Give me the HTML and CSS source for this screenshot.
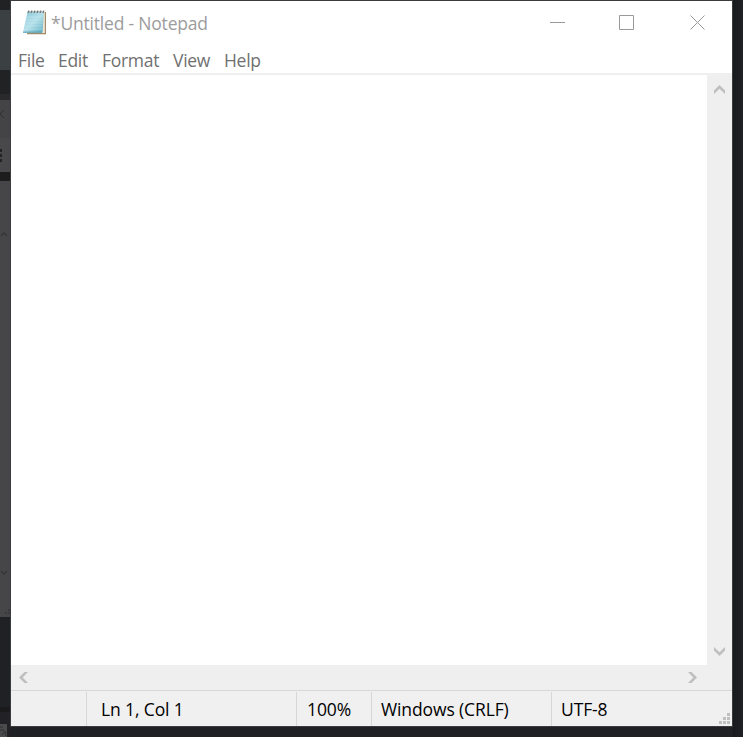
FILE: index.html
```html
<!DOCTYPE html>
<html lang="en">
<head>
<meta charset="utf-8">
<title>*Untitled - Notepad</title>
<link rel="stylesheet" href="styles.css">
</head>
<body>
<div class="desktop">
  <svg class="behind" width="11" height="737" fill="none">
    <path class="ink" d="M4 110l-4 4 4 4"/>
    <path class="dots" d="M0 149h2v3H0zM0 154h2v3H0zM0 159h2v3H0z"/>
    <path class="caret" d="M1 236l3-3 3 3M1 571l3 3 3-3"/>
    <path class="grain" d="M8 609h2v2H8zM5 612h2v2H5zM8 612h2v2H8z"/>
    <path class="doc" d="M0 724h7v13H0z"/>
    <path class="ink" d="M0 727h3M0 730h4M2 735l3-4 1 5"/>
  </svg>
  <main class="window">
    <header class="titlebar">
      <svg class="logo" width="26" height="28" viewBox="0 0 26 28">
        <defs>
          <linearGradient id="paper" x1="0" y1="0" x2="1" y2="1">
            <stop offset="0" stop-color="#8ac9d8"/><stop offset=".5" stop-color="#b4e0ea"/><stop offset="1" stop-color="#58abc1"/>
          </linearGradient>
        </defs>
        <path d="M6 4H24V26.300H5z" fill="#a08c6b"/>
        <path d="M6 4H22.800V25H5z" fill="#eee6d3"/>
        <path d="M5.500 4H22L20.500 24.500H1z" fill="url(#paper)"/>
        <path d="M4.500 9H21M4 12H20.700M3.500 15H20.400M3 18H20.100M2.400 21H19.800" stroke="#d4eff4" stroke-width=".8" opacity=".55"/>
        <path d="M1 24.200H20" stroke="#4f9aae"/>
        <path d="M5.500 3.800H22" stroke="#a8adae"/>
        <path d="M6 5L7 2.500M9 5L10 2.500M12 5L13 2.500M15 5L16 2.500M18 5L19 2.500M21 5L22 2.500" stroke="#6b7577" stroke-width="1.1"/>
      </svg>
      <h1 class="title">*Untitled - Notepad</h1>
      <svg class="controls" width="155" height="15" fill="none">
        <path d="M0 7.5h15M69.500 .5h14v14h-14z"/>
        <path d="M140.500 .5l14 14M154.500 .5l-14 14"/>
      </svg>
    </header>
    <nav class="menu"><span class="m-file">File</span><span class="m-edit">Edit</span><span class="m-format">Format</span><span class="m-view">View</span><span class="m-help">Help</span></nav>
    <section class="workspace">
      <div class="editor"></div>
      <div class="vscroll">
        <svg width="11" height="9"><path d="M0 5.500L5.500 0 11 5.500V9L5.500 3.700 0 9z"/></svg>
        <svg width="11" height="9"><path d="M0 0L5.500 5.300 11 0V3.500L5.500 9 0 3.500z"/></svg>
      </div>
      <div class="hscroll">
        <svg width="9" height="11"><path d="M5.500 0H9L3.700 5.500 9 11H5.500L0 5.500z"/></svg>
        <svg width="9" height="11"><path d="M0 0H3.500L9 5.500 3.500 11H0L5.300 5.500z"/></svg>
      </div>
    </section>
    <footer class="status">
      <div class="cell blank"></div>
      <div class="cell position"><span>Ln 1, Col 1</span></div>
      <div class="cell zoom"><span>100%</span></div>
      <div class="cell ending"><span>Windows (CRLF)</span></div>
      <div class="cell encoding"><span>UTF-8</span></div>
      <svg class="grip" width="11" height="11"><path d="M8 0h3v3H8zM4 4h3v3H4zM8 4h3v3H8zM0 8h3v3H0zM4 8h3v3H4zM8 8h3v3H8z"/></svg>
    </footer>
  </main>
</div>
</body>
</html>
```
FILE: styles.css
```css
* { box-sizing: border-box; }
body { margin: 0; overflow: hidden; font-family: "Open Sans", "Noto Sans", sans-serif; }
.desktop {
  display: flex;
  width: 743px;
  height: 737px;
  background: linear-gradient(90deg, transparent 732px, #191a1c 733px, #202125 743px), linear-gradient(#1e2023 727px, #202125);
}
.behind {
  flex: none;
  margin-right: -1px;
  background: linear-gradient(#202224 10px, #3b4042 10px 70px, #202224 70px 94px, #2a2a2c 94px 100px, #444446 100px 138px, #48484a 138px 172px, #1d1d1e 172px 181px, #464648 181px 617px, #1f2124 617px 707px, #1a1a1c 707px 712px, #222126 712px);
}
.ink { stroke: #303032; }
.dots { fill: #222224; }
.caret { stroke: #363638; stroke-width: 1.3; }
.grain { fill: #39393b; }
.doc { fill: #4b4b4d; }
.window {
  display: flex;
  flex-direction: column;
  width: 723px;
  height: 727px;
  border: 1px solid #3b3c3e;
  background: #fff;
}
.titlebar { display: flex; align-items: flex-start; height: 45px; padding-left: 11px; }
.logo { margin-top: 7px; }
.title { margin: 9px 0 0 3px; width: 499px; font-size: 17.5px; line-height: 27px; font-weight: 400; letter-spacing: -0.2px; color: #9c9c9c; white-space: nowrap; }
.controls { margin-top: 14px; stroke: #999; }
.menu { display: flex; height: 27px; padding-left: 7px; font-size: 17.5px; line-height: 29px; letter-spacing: -0.28px; color: #707070; white-space: nowrap; }
.m-file { width: 40px; }
.m-edit { width: 44px; }
.m-format { width: 71px; }
.m-view { width: 51px; }
.workspace { display: grid; grid-template: 592px 25px / 696px 25px; background: #efefef; }
.editor { margin-top: 2px; background: #fff; }
.vscroll { display: flex; flex-direction: column; justify-content: space-between; padding: 12px 0 9px 7px; fill: #bfbfbf; }
.hscroll { display: flex; justify-content: space-between; padding: 7px 10px 0 8px; fill: #bfbfbf; }
.status { position: relative; display: flex; height: 36px; border-top: 1px solid #d7d7d7; background: #f0f0f0; font-size: 17.5px; line-height: 34px; letter-spacing: -0.12px; color: #000; white-space: nowrap; }
.cell { height: 34px; margin-top: 1px; border-right: 1px solid #d7d7d7; }
.blank { width: 76px; }
.position { width: 210px; padding-left: 14px; }
.zoom { width: 75px; padding-left: 10px; }
.ending { width: 180px; padding-left: 9px; }
.encoding { padding-left: 9px; border: 0; }
.grip { position: absolute; right: 2px; bottom: 2px; fill: #bfbfbf; }
```
